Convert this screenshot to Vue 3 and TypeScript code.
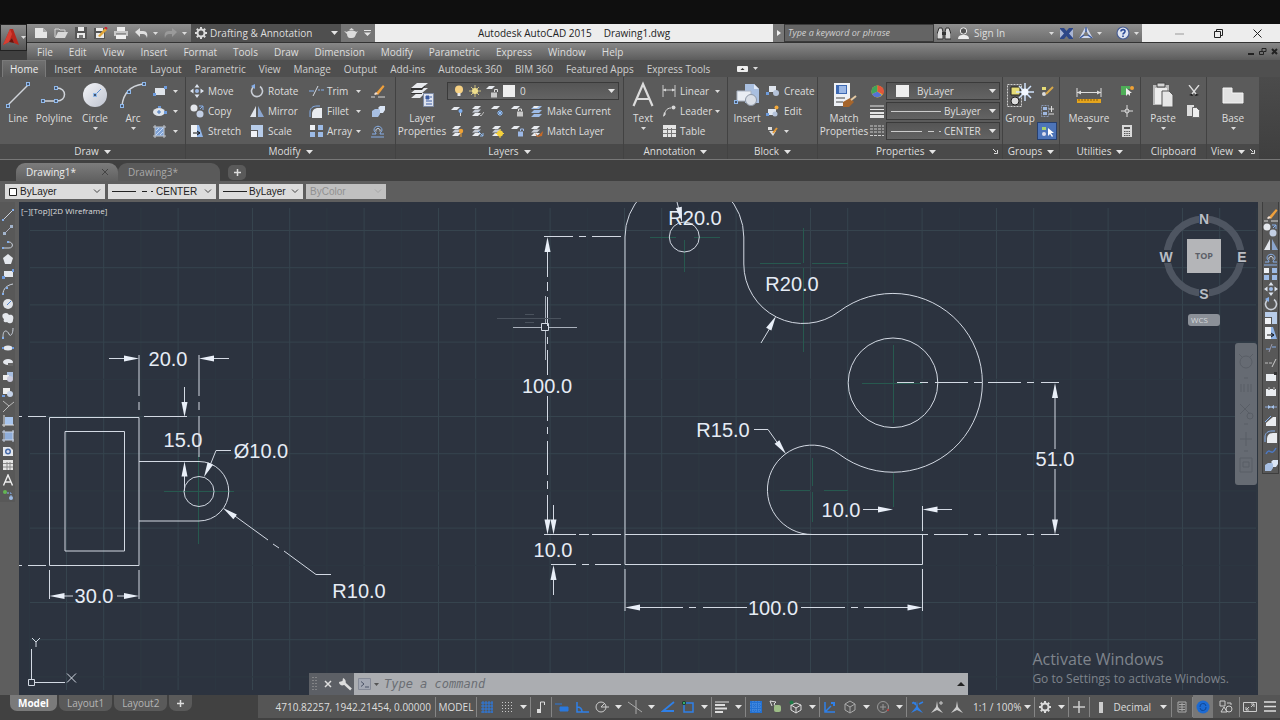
<script setup lang="ts">
import { h } from 'vue'

type Glyph = [number, number, string]

const sq = (x: number, y: number) => `<rect x="${x - 1.5}" y="${y - 1.5}" width="3" height="3" fill="#45556e" stroke="#8fb8ea"/>`
const sheet = (x: number, y: number, c = '#e8ebf0') => `<path d="M${x + 3} ${y}h6l-3 3h-6z" fill="${c}"/>`
const layers = sheet(1, 1) + sheet(1, 4.5, '#c6ccd6') + sheet(1, 8)

const glyphs: Record<string, Glyph> = {
  logo: [18, 20, '<path d="M1 17L8 1h3l6 16-5-2-2-5-3 4z" fill="#b8261c"/><path d="M8 1L1 17l6-3 3-8z" fill="#d63f33"/><path d="M7 14l3-4 2 5z" fill="#701009"/>'],
  caret: [7, 4, '<path d="M0 0h7L3.500 4z" fill="#e4e4e4"/>'],
  tiny: [5, 3, '<path d="M0 0h5L2.500 3z" fill="#dcdcdc"/>'],
  chevron: [8, 5, '<path d="M1 .5l3 3 3-3" fill="none" stroke="#444"/>'],
  up: [8, 4, '<path d="M0 4h8L4 0z" fill="#222"/>'],
  newfile: [14, 12, '<path d="M1 1h8l4 4v6H1z" fill="#e6e6e6"/><path d="M9 1v4h4" fill="#aaa"/>'],
  open: [15, 12, '<path d="M1 10V2h4l1 1h5v2" fill="none" stroke="#d5d5d5"/><path d="M1 11l3-6h10l-3 6z" fill="#d8d8d8"/>'],
  save: [12, 12, '<path d="M0 0h12v12H0z" fill="#555"/><path d="M3 0h6v4H3zM2 6h8v5H2z" fill="#e9e9e9"/><path d="M4 8h4v3H4z" fill="#777"/>'],
  saveas: [14, 12, '<path d="M0 1h11v11H0z" fill="#555"/><path d="M2 1h7v3H2zM2 6h8v5H2z" fill="#e9e9e9"/><path d="M4 9l7-8 2 2-7 7z" fill="#e0a63a"/><path d="M11 0l2 2" stroke="#c23" stroke-width="2"/>'],
  print: [14, 12, '<path d="M3 0h8v4H3z" fill="#eee"/><path d="M0 4h14v5H0z" fill="#c9c9c9"/><path d="M2 7h10v5H2z" fill="#f1f1f1"/><path d="M2 7h10" stroke="#555"/>'],
  undo: [13, 10, '<path d="M0 4l5-4v3h3c4 0 5 3 4 7-1-3-2-4-4-4H5v3z" fill="#e0e0e0"/>'],
  redo: [13, 10, '<path d="M13 4L8 0v3H5C1 3 0 6 1 10c1-3 2-4 4-4h3v3z" fill="#9a9a9a"/>'],
  gear: [12, 12, '<circle cx="6" cy="6" r="3.500" fill="none" stroke="#dcdcdc" stroke-width="2"/><path d="M6 0v2M6 10v2M0 6h2M10 6h2M1.800 1.800l1.400 1.400M8.800 8.800l1.400 1.400M1.800 10.200l1.400-1.400M8.800 3.200l1.400-1.400" stroke="#dcdcdc" stroke-width="2"/>'],
  teapot: [14, 10, '<path d="M0 3l3 1c1-2 8-2 9 0l2-1-2 3c-1 3-2 4-4 4H6C4 10 3 8 3 6z" fill="#dcdcdc"/><path d="M5 2h5L7.500 0z" fill="#dcdcdc"/>'],
  overflow: [7, 6, '<path d="M0 0h7v1H0zM0 2.500h7L3.500 6z" fill="#e4e4e4"/>'],
  play: [4, 6, '<path d="M0 0l4 3-4 3z" fill="#eee"/>'],
  binoc: [14, 13, '<path d="M2 1h3l1 4v7H0V7zM9 1h3l2 6v5H8V5z" fill="#ddd" stroke="#333"/><path d="M5 5h4v3H5z" fill="#333"/>'],
  person: [13, 13, '<circle cx="6.500" cy="4" r="3.200" fill="#555" stroke="#eee"/><path d="M1 12c0-3 2-4 4-4h3c2 0 4 1 4 4z" fill="#eee"/>'],
  exch: [13, 11, '<path d="M0 0h4l2.500 3L9 0h4v11H9L6.500 8 4 11H0z" fill="#2d4788"/><path d="M0 1l4 4.500L0 10zM13 1L9 5.500 13 10z" fill="#a9b5d3"/>'],
  a360: [14, 12, '<path d="M7 1l5 9H2z" fill="none" stroke="#cfd8ee" stroke-width="2"/><path d="M7 0v5M13 11l-4-3M1 11l4-3" stroke="#3c5a9e" stroke-width="1.500"/>'],
  help: [14, 14, '<circle cx="7" cy="7" r="6" fill="#dde3f0" stroke="#4a5f94" stroke-width="1.200"/><path d="M5 5.500C5 3 9.500 3 9 5.500 9 7 7 7 7 8.500M7 9.500V11" fill="none" stroke="#2b4a98" stroke-width="1.600"/>'],
  wmin: [9, 9, '<path d="M0 5h9" stroke="#999"/>'],
  wmax: [9, 9, '<path d="M.5 2.500h6v6h-6zM2.500 2V.5h6v6H7" fill="none" stroke="#222"/>'],
  wclose: [9, 9, '<path d="M.5.5l8 8M8.500.5l-8 8" stroke="#222"/>'],
  dmin: [7, 7, '<path d="M0 6h6" stroke="#222" stroke-width="2"/>'],
  dmax: [8, 7, '<path d="M.5 3.500h4v3h-4zM3 3V.5h4v3H5" fill="none" stroke="#222"/>'],
  dclose: [7, 7, '<path d="M1 1l5 5M6 1L1 6" stroke="#222" stroke-width="2"/>'],
  ribmin: [11, 6, '<rect width="11" height="6" rx="1" fill="#eee"/><path d="M3.500 4h4L5.500 2z" fill="#333"/>'],
  expand: [5, 5, '<path d="M0 0l3 3M4.500 1v3.500H1" fill="none" stroke="#ddd"/>'],
  plus: [7, 7, '<path d="M3.500 0v7M0 3.500h7" stroke="#ddd" stroke-width="1.500"/>'],
  cross: [6, 6, '<path d="M0 0l6 6M6 0L0 6" stroke="#444"/>'],
  // large ribbon glyphs
  line: [26, 28, '<path d="M3 24L23 4" stroke="#d0d4da" stroke-width="1.500"/>' + sq(3, 25) + sq(23, 3)],
  pline: [28, 28, '<path d="M3 20h14c10 0 10-13 0-13" fill="none" stroke="#d0d4da" stroke-width="1.500"/>' + sq(3, 20) + sq(16, 20) + sq(16, 7)],
  circle: [26, 28, '<circle cx="13" cy="14" r="12" fill="url(#g-disc)"/><path d="M13 14l6-6" stroke="#5b8fd4"/>' + sq(13, 14)],
  arc: [26, 28, '<path d="M2 25C3 14 9 5 23 3" fill="none" stroke="#d0d4da" stroke-width="1.500"/>' + sq(2, 25) + sq(9, 11) + sq(24, 3)],
  layerprops: [26, 26, '<path d="M8 1h11l-6 5H2zM8 6h11l-6 5H2zM8 11h8l-5 5H2z" fill="#e8eaee"/><path d="M2 6h11l3-2.500v1L13 8H2zM2 11h11v1H2z" fill="#333"/><path d="M14.500 11.500h10v13h-10z" fill="#dfe4ef" stroke="#7e8ba5"/><path d="M17 14h3v3h-3zM17 19h6M17 22h6M21 15h2" stroke="#3a5aa0" fill="#3a5aa0"/>'],
  text: [22, 28, '<path d="M1.500 25L11 3l9.500 22M5 18h12" fill="none" stroke="#dcdcdc" stroke-width="2.200"/>'],
  insert: [28, 28, '<path d="M12 3h9l5 5v14H12z" fill="#a9bfe0"/><path d="M21 3v5h5" fill="#dfe8f6"/><path d="M4 10h14v10H4z" fill="#e9edf3" stroke="#aab4c4"/><circle cx="18" cy="19" r="5.500" fill="#d9dee6" stroke="#8d97a6"/>' + sq(3, 21)],
  match: [26, 28, '<path d="M3 2h16v23H3z" fill="#eef1f6"/><path d="M5 4h11v9H5z" fill="#3d69b3"/><path d="M8 5h7v7H8z" fill="#9cb8e6"/><path d="M5 17h9M5 21h7" stroke="#444"/><path d="M12 21l7-4 4 4-5 5h-6z" fill="#a5652c"/><path d="M20 19l5-4" stroke="#e3c9a4" stroke-width="2"/>'],
  group: [28, 28, '<path d="M1.500 3.500h14v22h-14z" fill="none" stroke="#cfcfcf" stroke-dasharray="2 1"/><path d="M5 6h9v8H5z" fill="#e6dc76" stroke="#222"/><circle cx="9" cy="20" r="4" fill="#ddd" stroke="#222"/><path d="M19 2v18M10 11h18M13 5l12 12M25 5L13 17" stroke="#cfe2fb" stroke-width="1.500"/><circle cx="19" cy="11" r="3.500" fill="#f3f8ff"/>'],
  measure: [26, 28, '<path d="M1 7v9M25 7v9M1 11.500h24" stroke="#ddd"/><path d="M1 11.500l4-2v4zM25 11.500l-4-2v4z" fill="#ddd"/><path d="M1 18h24v4H1z" fill="#e5a51d"/><path d="M3 18v2M6 18v2M9 18v2M12 18v2M15 18v2M18 18v2M21 18v2" stroke="#8c5c05"/>'],
  paste: [24, 28, '<path d="M2 4h16v20H2z" fill="#b9b9b9"/><path d="M4 7h12v16H4z" fill="#ededed"/><path d="M6 2h8v4H6z" fill="#d5d5d5" stroke="#444"/><path d="M11 10h7l4 4v12H11z" fill="#e6e6e6" stroke="#555"/>'],
  base: [24, 28, '<path d="M2 7h9v5h11v10H2z" fill="#e2e2e2" stroke="#f5f5f5"/>'],
  // small ribbon glyphs
  rect: [15, 13, '<path d="M3 3h10v7H3z" fill="#dfe4ea"/><path d="M1 8h3v3H1zM12 1h3v3h-3z" fill="#6d9bdc"/>'],
  ellipse: [15, 13, '<ellipse cx="7" cy="7" rx="6" ry="4" fill="#dfe4ea"/><path d="M5 7h4M7 5v4" stroke="#4275bd"/><path d="M12 6h3v3h-3zM6 1h3v2H6z" fill="#6d9bdc"/>'],
  hatch: [15, 15, '<path d="M3 3h9v9H3z" fill="#7fa2d4"/><path d="M1 3h13M1 12h13M3 1v13M12 1v13" stroke="#c3c9d2"/><path d="M4 11l7-7M4 7l3-3M8 11l3-3" stroke="#c8d9f3"/>'],
  move: [14, 14, '<path d="M7 0l2.500 3.500h-5zM7 14l2.500-3.500h-5zM0 7l3.500-2.500v5zM14 7l-3.500-2.500v5z" fill="#dce3ee"/><circle cx="7" cy="7" r="2" fill="#9db9e4"/>'],
  copy: [15, 14, '<circle cx="4" cy="4" r="3.500" fill="#e4e7ec"/><circle cx="10" cy="10" r="3.500" fill="#c3cfe4"/><path d="M9 2h4v4M13 2l-3 3" fill="none" stroke="#86aee8"/>'],
  stretch: [14, 14, '<path d="M1 1h6v12H1z" fill="#eef1f5"/><path d="M7 1h2l4 12H7z" fill="#8fb3e6"/><path d="M3 9h6M7 7l3 2-3 2" stroke="#111" fill="none"/>'],
  rotate: [14, 14, '<path d="M4 2.500A5.500 5.500 0 1 0 10 2.500" fill="none" stroke="#c9ced6" stroke-width="1.600"/><path d="M5 0v5L1 2z" fill="#86aee8"/>'],
  mirror: [14, 13, '<path d="M6 1v11H0z" fill="#e2e6ec"/><path d="M8 1v11h6z" fill="#8ba6cf"/>'],
  scale: [14, 14, '<path d="M1 1h12v12H8V6H1z" fill="#b8cdea"/><path d="M1 7h6v6H1z" fill="#f0f2f6"/>'],
  trim: [15, 12, '<path d="M0 6h5M9 5h2M12 5h3" stroke="#84aeea"/><path d="M4 11L9 1" stroke="#d5dae2"/>'],
  fillet: [14, 13, '<path d="M3 13V9c0-4 3-6 6-6h4v10z" fill="#e9ecf0"/><path d="M1 12V7c0-4 3-6 7-6h3" fill="none" stroke="#84aeea"/>'],
  array: [15, 14, '<path d="M1 1h5v5H1z" fill="#eef1f5"/><path d="M9 1h5v5H9zM1 8h5v5H1zM9 8h5v5H9z" fill="#9dbbe6"/>'],
  erase: [14, 14, '<path d="M5 9l7-8 1.500 1.500L7 11z" fill="#efa03c"/><path d="M3 10l2-2 2 2-3 1z" fill="#f1ded0"/><path d="M0 13h4M7 13h7" stroke="#d7d7d7"/>'],
  explode: [14, 13, '<path d="M1 6l3-2h5v5l-2 3H1z" fill="#a7bfe3"/><path d="M7 3l2-2h5v4l-2 3H9V5z" fill="#dae5f5"/>'],
  offset: [14, 13, '<path d="M0 12h13M1 9h4c0-2-2-2-2-4 0-5 8-5 8 0 0 2-2 2-2 4h4" fill="none" stroke="#86aee8"/><path d="M5 6.500c-1-4 5-4 4 0" fill="none" stroke="#dce3ee"/>'],
  l1: [13, 12, sheet(0, 2) + '<circle cx="9.500" cy="6" r="2" fill="#7fb0f2"/><path d="M9.500 8v3" stroke="#ddd"/>'],
  l2: [13, 12, layers + '<path d="M8 9l2 2 3-4" stroke="#bbb" fill="none"/>'],
  l3: [13, 12, sheet(0, 1) + '<path d="M9 5v6M6 8h6M7 6l4 4M11 6l-4 4" stroke="#8fc0ff"/>'],
  l4: [13, 12, sheet(0, 1) + '<path d="M6 6.500h6v5H6z" fill="#c8c8c8"/><path d="M7.500 6V4h3v2" fill="none" stroke="#ddd"/>'],
  l5: [13, 13, '<path d="M4 1h8l-3 3H1zM4 5h8l-3 3H1zM4 9h8l-3 3H1z" fill="#9dbbe6"/><path d="M4 1h5l-2 2H3z" fill="#eee"/>'],
  m1: [13, 12, layers + '<circle cx="10" cy="6" r="2.200" fill="#f0a234"/><path d="M10 8v4" stroke="#f0a234"/>'],
  m2: [13, 12, layers + '<path d="M7 6l5 5M12 8v3H9" stroke="#8fb8ea" fill="none"/>'],
  m3: [13, 13, layers + '<circle cx="9" cy="8.500" r="3" fill="#f5d13c"/><path d="M9 4v9M4.500 8.500h9" stroke="#f5d13c"/>'],
  m4: [13, 12, sheet(0, 1) + '<path d="M7 6.500h5v5H7z" fill="#9cb8e6"/><path d="M9.500 6V4h3v2" fill="none" stroke="#9cb8e6"/>'],
  m5: [13, 12, layers + '<path d="M5 8l3 3 5-5-1 5-5 1z" fill="#c96a26"/>'],
  bulb: [10, 13, '<circle cx="5" cy="4.500" r="4" fill="#f6d183"/><path d="M3.500 8h3v3h-3z" fill="#e7e7e7"/>'],
  sun: [12, 12, '<circle cx="6" cy="6" r="3" fill="#f7e58e"/><path d="M6 0v12M0 6h12M2 2l8 8M10 2l-8 8" stroke="#e9d98c" stroke-width=".8"/>'],
  unlock: [12, 13, sheet(0, 1) + '<path d="M5 7.500h6v5H5z" fill="#c8c8c8"/><path d="M8.500 7V4.500h3V7" fill="none" stroke="#ddd"/>'],
  white: [12, 12, '<path d="M0 0h12v12H0z" fill="#eee"/>'],
  wide: [13, 12, '<path d="M0 0h13v12H0z" fill="#eee"/>'],
  linear: [14, 12, '<path d="M1 0v12M13 0v12M1 5h12" stroke="#c8c8c8"/><path d="M1 5l3-1.500v3zM13 5l-3-1.500v3z" fill="#d8d8d8"/>'],
  leader: [13, 12, '<path d="M1 11c1-4 2-8 7-8" fill="none" stroke="#d8d8d8"/><circle cx="10.500" cy="2.500" r="2" fill="#d8d8d8"/><path d="M0 12l1-5 2 2z" fill="#d8d8d8"/>'],
  table: [13, 12, '<path d="M0 0h13v12H0z" fill="#e5e5e5"/><path d="M0 4.500h13M0 8.500h13M4.500 3v9M8.500 3v9" stroke="#777"/>'],
  create: [14, 12, '<path d="M3 1h7v6H3z" fill="#dfe5ee"/><circle cx="10" cy="8" r="3" fill="#b5c3da"/><path d="M0 7h3v3H0z" fill="#6d9bdc"/>'],
  edit: [14, 12, '<path d="M2 4h8v6H2z" fill="#dfe5ee"/><circle cx="10.500" cy="2.500" r="2" fill="#f3a93b"/><circle cx="9" cy="9" r="2.500" fill="#b5c3da"/><path d="M0 8h3v3H0z" fill="#6d9bdc"/>'],
  attr: [12, 11, '<path d="M1 1h4v3H1zM2 5l4 5 3-5z" fill="#ddd"/><path d="M6 7l4-5" stroke="#e59a35" stroke-width="2"/>'],
  wheel: [13, 13, '<circle cx="6.500" cy="6.500" r="6" fill="#e6c52a"/><path d="M6.500 6.500V.5A6 6 0 0 0 1 9z" fill="#3fa55b"/><path d="M6.500 6.500L1 9a6 6 0 0 0 10 1z" fill="#5573d4"/><path d="M6.500 6.500V.5a6 6 0 0 1 5.500 9z" fill="#e2553b"/>'],
  weights: [14, 13, '<path d="M0 1h14M0 4.500h14" stroke="#e5e5e5"/><path d="M0 8h14" stroke="#e5e5e5" stroke-width="2"/><path d="M0 11.500h14" stroke="#e5e5e5" stroke-width="3"/>'],
  dashes: [14, 12, '<path d="M0 1h14M0 4h14M0 7h14M0 10.500h14" stroke="#ccc" stroke-dasharray="3 1"/>'],
  g1: [13, 12, '<path d="M1 2h4v3H1z" fill="#e6dc76"/><circle cx="3" cy="9" r="2" fill="#ddd"/><path d="M5 9l7-7" stroke="#d9a94a" stroke-width="2"/>'],
  g2: [13, 12, '<path d="M.5.500h7v11h-7z" fill="none" stroke="#8b99b5" stroke-dasharray="2 1"/><path d="M2 2h4v3H2zM2 7h4v3H2z" fill="#9fb8e0"/><path d="M8 4h5M10.500 1v6M8 9h5" stroke="#ddd"/>'],
  g3: [13, 12, '<path d="M1 2h4v3H1z" fill="#a8cf6e"/><circle cx="3" cy="9" r="2" fill="#dde"/><path d="M7 3v8l2-2 2 3 1-1-2-3h3z" fill="#fff"/>'],
  u1: [14, 12, '<path d="M1 1h5v9H1zM6 1h4v3H6z" fill="#4fae58"/><path d="M6 3v8l2-2 2 2V8h2z" fill="#eee"/><circle cx="12" cy="3" r="2" fill="#f0a234"/>'],
  u2: [12, 12, '<path d="M6 0v12M0 6h12" stroke="#ddd"/><circle cx="6" cy="6" r="2" fill="#888" stroke="#ddd"/>'],
  u3: [10, 12, '<path d="M0 0h10v12H0z" fill="#d9d9d9"/><path d="M2 2h6v2H2z" fill="#555"/><path d="M2 6.500h6M2 8.500h6M2 10.500h6" stroke="#555" stroke-dasharray="1.500 .8"/>'],
  cut: [12, 12, '<path d="M1 0l7 9M11 0L4 9" stroke="#ddd" stroke-width="1.300"/><path d="M1 10l3-1 1 2zM11 10l-3-1-1 2z" fill="#111"/>'],
  copyc: [13, 13, '<path d="M0 0h7v11H0z" fill="#ddd"/><path d="M5.500 2.500h4l3 3v7h-7z" fill="#eee" stroke="#666"/>'],
  // tool palette glyphs
  tline: [12, 12, '<path d="M1 11L11 1" stroke="#ccd3dd"/><path d="M0 10h2v2H0zM10 0h2v2h-2z" fill="#84aeea"/>'],
  txline: [12, 12, '<path d="M1 11L11 1" stroke="#aab"/><path d="M1 8h3v3H1zM8 1h3v3H8z" fill="#a3b4cc"/>'],
  tpline: [12, 12, '<path d="M1 9h6c5 0 4-6 0-6" fill="none" stroke="#ccd3dd"/><path d="M0 8h2v2H0zM5 2h2v2H5z" fill="#84aeea"/>'],
  poly: [12, 12, '<path d="M6 1l5 4-2 6H3L1 5z" fill="#e4e7ec"/>'],
  trect: [12, 12, '<path d="M2 3h9v6H2z" fill="#e4e7ec"/><path d="M0 8h3v3H0zM10 1h2v3h-2z" fill="#6f9bdd"/>'],
  tarc: [12, 12, '<path d="M1 11C1 6 5 2 11 1" fill="none" stroke="#ccd3dd"/><path d="M0 10h2v2H0zM4 4h2v2H4z" fill="#84aeea"/>'],
  tcircle: [12, 12, '<circle cx="6" cy="6" r="5" fill="#e0e4ea"/><path d="M5 7l4-4" stroke="#4d7fc9"/>'],
  cloud: [12, 12, '<path d="M1 2c3-2 5-1 6 1 4-1 5 2 4 5 0 4-4 4-6 2-3 1-4-1-3-3-2-1-2-4-1-5z" fill="#e4e7ec"/>'],
  spline: [12, 12, '<path d="M1 10c0-9 5-6 6-3s4 1 4-6" fill="none" stroke="#ccd3dd"/><path d="M0 10h2v2H0z" fill="#84aeea"/>'],
  tell: [12, 12, '<ellipse cx="6" cy="6" rx="4.500" ry="2.500" fill="#e4e7ec"/><path d="M0 5h2v2H0zM10 5h2v2h-2z" fill="#6f9bdd"/>'],
  tellarc: [12, 12, '<ellipse cx="6" cy="6" rx="5" ry="3" fill="#e4e7ec"/><path d="M6 7h5v3H6z" fill="#666"/>'],
  tins: [12, 12, '<path d="M5 1h6v6H5z" fill="#a9bfe0"/><path d="M1 4h6v5H1z" fill="#eee"/><circle cx="8" cy="8" r="3" fill="#ccd"/>'],
  tblock: [12, 12, '<path d="M1 2h7v6H1z" fill="#eee"/><circle cx="8" cy="8" r="3" fill="#c6d4ea"/><path d="M0 9h3v2H0z" fill="#6f9bdd"/>'],
  tpoint: [12, 12, '<path d="M1 1l6 5 5-4M7 6l-6 6" fill="none" stroke="#bbb"/>'],
  thatch: [12, 12, '<path d="M3 2h8v8H3z" fill="#a9c6ee"/><path d="M2 0v12M0 10h12" stroke="#ddd"/>'],
  tgrad: [12, 12, '<path d="M3 2h8v8H3z" fill="#8fadd9"/><path d="M2 0v12M0 10h12M0 2h12M11 0v12" stroke="#c9d4e6"/>'],
  region: [12, 12, '<path d="M1 2h7l3 3v6H1z" fill="#e4e7ec"/><circle cx="6" cy="6.500" r="3" fill="#456ba8"/><circle cx="6" cy="6.500" r="1.500" fill="#dde"/>'],
  ttable: [12, 12, '<path d="M1 1h10v10H1z" fill="#e5e5e5"/><path d="M1 4.500h10M1 8h10M5 3v8M8 3v8" stroke="#888"/>'],
  mtext: [12, 12, '<path d="M1.500 11.500L6 1l4.500 10.500M3 8h6" fill="none" stroke="#eee" stroke-width="1.400"/>'],
  addsel: [12, 12, '<circle cx="3" cy="3" r="2" fill="#64b552"/><circle cx="9" cy="9" r="2" fill="#9dbbe6"/><path d="M5 4h4v3" fill="none" stroke="#84aeea" stroke-dasharray="2 1"/>'],
  tbreak: [12, 12, '<path d="M1 7h4M7 5h4" stroke="#84aeea"/><path d="M4 10l3-8" stroke="#99a" />'],
  textend: [12, 12, '<path d="M0 6h3M4 6h3" stroke="#bbb"/><path d="M7 10l4-8" stroke="#ccc"/>'],
  tbreak1: [12, 12, '<path d="M1 3h10v7H1z" fill="#e9ecf0"/><path d="M9 1h3v3H9z" fill="#333"/>'],
  tbreak2: [12, 12, '<path d="M1 3h10v7H1z" fill="#e9ecf0"/><path d="M3 1h2v3H3zM8 1h2v3H8z" fill="#888"/>'],
  tjoin: [12, 12, '<path d="M0 6h12" stroke="#8fa9d6"/><path d="M3 4l3 2-3 2zM9 4L6 6l3 2z" fill="#a9c6ee"/>'],
  chamfer: [12, 12, '<path d="M1 11V8l7-6h3v9z" fill="#e9ecf0"/><path d="M0 7l6-6" stroke="#84aeea"/>'],
  blend: [12, 12, '<path d="M1 9c4-8 5 4 10-6" fill="none" stroke="#4c79c4" stroke-width="1.500"/>'],
  // command line + status glyphs
  grip: [5, 16, '<path d="M1 1v14M4 1v14" stroke="#aaa" stroke-dasharray="1 2"/>'],
  x: [8, 8, '<path d="M1 1l6 6M7 1L1 7" stroke="#ddd" stroke-width="1.500"/>'],
  wrench: [13, 13, '<path d="M5 5l7 6.500" stroke="#ddd" stroke-width="2.500"/><path d="M4 0l-.5 3L0 4c0 3 3 4 5 3s3-5-1-7z" fill="#ddd"/>'],
  prompt: [13, 12, '<path d="M.5.500h12v11H.5z" fill="#a3a8b4" stroke="#868b98"/><path d="M3 3.500l3 2.500-3 2.500M7 9h4" fill="none" stroke="#4c5468"/>'],
  greytiny: [5, 3, '<path d="M0 0h5L2.500 3z" fill="#555"/>'],
  sgrid: [12, 12, '<path d="M2 0v12M5 0v12M8 0v12M11 0v12M0 2h12M0 5h12M0 8h12M0 11h12" stroke="#2d7be0"/>'],
  sdots: [12, 12, '<path d="M1.500 1v11M4.500 1v11M7.500 1v11M10.500 1v11" stroke="#c9c9c9" stroke-dasharray="1 2"/>'],
  infer: [10, 12, '<path d="M4.500 9V1h4v3" fill="none" stroke="#ddd"/><path d="M1 8h4v4H1z" fill="#ddd"/>'],
  dyn: [14, 12, '<path d="M0 3h7M5 6h8v4H5z" stroke="#2b78dc" fill="#2b78dc"/>'],
  ortho: [14, 12, '<path d="M2 1v10h12M2 6c4 0 5 2 5 5" fill="none" stroke="#2f80e8" stroke-width="1.500"/>'],
  polar: [14, 14, '<circle cx="6" cy="7" r="5" fill="none" stroke="#ccc"/><path d="M6 7l4-4M6 7h8" stroke="#ccc"/>'],
  iso: [14, 14, '<path d="M0 2l14 10M8 0v14" stroke="#aaa"/>'],
  otrack: [14, 12, '<path d="M13 1L2 10h11" fill="none" stroke="#2f80e8" stroke-width="1.800"/>'],
  osnap: [14, 14, '<path d="M3 3h9v9H3z" fill="none" stroke="#2f80e8" stroke-width="1.500"/><circle cx="3" cy="3" r="2" fill="#143d2a"/><circle cx="3" cy="3" r="1" fill="#4ad07a"/>'],
  lwt: [14, 12, '<path d="M0 1h14" stroke="#ddd"/><path d="M0 4h10" stroke="#ddd" stroke-width="2"/><path d="M0 7.500h12" stroke="#ddd" stroke-width="2"/><path d="M0 11h8" stroke="#ddd" stroke-width="2"/>'],
  transp: [14, 14, '<path d="M1 1h12v12H1z" fill="#2371d2"/><path d="M1 4h12M1 7h12M1 10h12M4 1v12M7 1v12M10 1v12" stroke="#5594e2" stroke-dasharray="1 1"/>'],
  selcyc: [14, 13, '<path d="M1 1l6 1-2 2 2 3M1 1l2 5" stroke="#ddd" fill="none"/><rect x="5" y="5" width="7" height="7" rx="2" fill="#9dbd86"/>'],
  cube3: [14, 14, '<path d="M7 3l5 2v5l-5 3-5-3V5zM2 5l5 3 5-3M7 8v5" fill="none" stroke="#ddd"/><circle cx="2.500" cy="2.500" r="2" fill="#1c7a45"/>'],
  ucs: [14, 14, '<path d="M2 2v10h10M2 12l6-6" fill="none" stroke="#2f80e8" stroke-width="1.500"/><path d="M8 3h3v3" fill="none" stroke="#2f80e8" stroke-width="2"/>'],
  cube: [14, 14, '<path d="M7 1l5 3v6l-5 3-5-3V4zM2 4l5 3 5-3M7 7v6" fill="none" stroke="#aaa"/>'],
  gizmo: [14, 14, '<circle cx="7" cy="7" r="5.500" fill="none" stroke="#999"/><path d="M7 4v6M4 7h6" stroke="#999"/><circle cx="12" cy="10" r="1" fill="#c33"/>'],
  ann1: [14, 14, '<path d="M7 1l1 6 5 6-6-3-6 3 5-6z" fill="#2f80e8"/><path d="M2 3h4M9 4l4-2M3 2l3 3" stroke="#2f80e8" stroke-width="1.500"/>'],
  ann2: [14, 14, '<path d="M7 1l1 6 5 6-6-3-6 3 5-6z" fill="#ccc"/><path d="M9 3h4M11 1v4" stroke="#ccc"/>'],
  ann3: [14, 14, '<path d="M7 1l1 6 5 6-6-3-6 3 5-6z" fill="#ccc"/>'],
  splus: [12, 12, '<path d="M6 0v12M0 6h12" stroke="#ccc" stroke-width="1.500"/>'],
  unit: [6, 12, '<path d="M1 1h4v11H1z" fill="#ccc"/>'],
  qprop: [10, 12, '<path d="M1 1h8v10H1z" fill="none" stroke="#aaa"/><path d="M2 3.500h6M2 6h6M2 8.500h6M5 2v8" stroke="#aaa"/>'],
  gpu: [14, 14, '<circle cx="7" cy="7" r="6.500" fill="#1c6ad2"/><path d="M4 7a3 3 0 0 1 6-1M10 7a3 3 0 0 1-6 1" fill="none" stroke="#0d4696"/>'],
  isolate: [14, 13, '<path d="M1 1h5v5H1zM5 7l3 5H2z" fill="none" stroke="#ccc"/><circle cx="10" cy="9" r="3" fill="none" stroke="#ccc"/><path d="M8 3h4v2" fill="none" stroke="#ccc"/>'],
  clean: [14, 12, '<path d="M.5 1.500h13v9H.5z" fill="none" stroke="#ccc"/><path d="M8 6l3-3M11 6V3H8M3 6v3h3M3 9l3-3" fill="none" stroke="#ccc"/>'],
  menu: [12, 11, '<path d="M0 1h12M0 5.500h12M0 10h12" stroke="#ddd" stroke-width="1.300"/>'],
  swatch: [8, 8, '<path d="M.5.500h7v7h-7z" fill="#fff" stroke="#222"/>'],
  dashDark: [42, 3, '<path d="M0 1.500h24M30 1.500h5M39 1.500h2" stroke="#222"/>'],
  lineDark: [24, 3, '<path d="M0 1.500h24" stroke="#222"/>'],
  lineLight: [50, 3, '<path d="M0 1.500h50" stroke="#ccc"/>'],
  dashLight: [50, 3, '<path d="M0 1.500h31M37 1.500h6M48 1.500h2" stroke="#ccc"/>'],
}

const Icon = (props: { name: string }) => {
  const [w, hh, body] = glyphs[props.name]
  return h('svg', { width: w, height: hh, viewBox: `0 0 ${w} ${hh}`, 'aria-hidden': 'true', innerHTML: body })
}
Icon.props = ['name']

const menus = ['File', 'Edit', 'View', 'Insert', 'Format', 'Tools', 'Draw', 'Dimension', 'Modify', 'Parametric', 'Express', 'Window', 'Help']
const tabs = ['Home', 'Insert', 'Annotate', 'Layout', 'Parametric', 'View', 'Manage', 'Output', 'Add-ins', 'Autodesk 360', 'BIM 360', 'Featured Apps', 'Express Tools']

interface Cmd { icon: string; label?: string; drop?: boolean }
const modify: Cmd[][] = [
  [{ icon: 'move', label: 'Move' }, { icon: 'copy', label: 'Copy' }, { icon: 'stretch', label: 'Stretch' }],
  [{ icon: 'rotate', label: 'Rotate' }, { icon: 'mirror', label: 'Mirror' }, { icon: 'scale', label: 'Scale' }],
  [{ icon: 'trim', label: 'Trim', drop: true }, { icon: 'fillet', label: 'Fillet', drop: true }, { icon: 'array', label: 'Array', drop: true }],
  [{ icon: 'erase' }, { icon: 'explode' }, { icon: 'offset' }],
]
const drawBig: Cmd[] = [{ icon: 'line', label: 'Line' }, { icon: 'pline', label: 'Polyline' }, { icon: 'circle', label: 'Circle', drop: true }, { icon: 'arc', label: 'Arc', drop: true }]

const drawTools = ['tline', 'txline', 'tpline', 'poly', 'trect', 'tarc', 'tcircle', 'cloud', 'spline', 'tell', 'tellarc', 'tins', 'tblock', 'tpoint', 'thatch', 'tgrad', 'region', 'ttable', 'mtext', 'addsel']
const editTools = ['erase', 'copy', 'mirror', 'offset', 'array', 'move', 'rotate', 'scale', 'stretch', 'tbreak', 'textend', 'tbreak1', 'tbreak2', 'tjoin', 'chamfer', 'fillet', 'blend', 'explode']

const statusLeft = ['sgrid', 'sdots', 'caret', '|', 'infer', '|', 'dyn', 'ortho', 'polar', 'caret', 'iso', 'caret', 'otrack', 'osnap', 'caret', '|', 'lwt', 'caret', '|', 'transp', 'selcyc', 'cube3', 'caret', '|', 'ucs', 'cube', 'caret', 'gizmo', 'caret', '|', 'ann1', 'ann2', 'ann3']

const range = (n: number) => Array.from({ length: n }, (_, i) => i)
const gridX = range(34).map(k => ({ at: 66.5 + 37.2 * (k - 1), major: [1, 2, 4].includes(k % 5) }))
const gridY = range(13).map(k => ({ at: 230.5 + 37.2 * k, major: ![4, 7, 9, 12].includes(k) }))

interface Arrow { x: number; y: number; a: number }
const arrows: Arrow[] = [
  { x: 139, y: 358.5, a: 0 }, { x: 199, y: 358.5, a: 180 }, { x: 184.5, y: 417, a: 90 }, { x: 184.5, y: 461.5, a: -90 },
  { x: 49.5, y: 596, a: 180 }, { x: 139, y: 596, a: 0 }, { x: 204, y: 477, a: 115 }, { x: 223, y: 508, a: 216 },
  { x: 547.5, y: 237, a: -90 }, { x: 547.5, y: 534.5, a: 90 }, { x: 553.5, y: 534.5, a: 90 }, { x: 553.5, y: 565, a: -90 },
  { x: 625, y: 607.5, a: 180 }, { x: 922.5, y: 607.5, a: 0 }, { x: 893, y: 509.5, a: 0 }, { x: 922.5, y: 509.5, a: 180 },
  { x: 1055, y: 383, a: -90 }, { x: 1055, y: 534.5, a: 90 }, { x: 786, y: 454, a: 53 }, { x: 776, y: 316, a: -61 }, { x: 682, y: 222, a: 78 },
]
const dims = [
  { x: 168, y: 366, t: '20.0' }, { x: 183, y: 447, t: '15.0' }, { x: 261, y: 458, t: 'Ø10.0' }, { x: 94, y: 603, t: '30.0' }, { x: 359, y: 598, t: 'R10.0' },
  { x: 695, y: 225, t: 'R20.0' }, { x: 792, y: 291, t: 'R20.0' }, { x: 547, y: 393, t: '100.0' }, { x: 723, y: 437, t: 'R15.0' }, { x: 553, y: 557, t: '10.0' },
  { x: 841, y: 517, t: '10.0' }, { x: 1055, y: 466, t: '51.0' }, { x: 773, y: 615, t: '100.0' },
]
</script>

<template>
  <div class="app">
    <svg class="defs" aria-hidden="true"><defs><linearGradient id="g-disc" x1="0" y1="0" x2="1" y2="1"><stop offset="0" stop-color="#f4f5f8" /><stop offset="1" stop-color="#bfc4d0" /></linearGradient></defs></svg>
    <div class="letterbox"></div>
    <header class="head">
      <button class="appbtn" aria-label="Application menu"><Icon name="logo" /><Icon name="tiny" /></button>
      <div class="headrows">
        <div class="titlebar">
          <div class="quick">
            <button v-for="n in ['newfile', 'open', 'save', 'saveas', 'print']" :key="n" :aria-label="n" class="q"><Icon :name="n" /></button>
            <button class="q" aria-label="Undo"><Icon name="undo" /></button><button class="qd" aria-label="Undo list"><Icon name="tiny" /></button>
            <button class="q" aria-label="Redo"><Icon name="redo" /></button><button class="qd" aria-label="Redo list"><Icon name="tiny" /></button>
          </div>
          <label class="workspace"><Icon name="gear" /><select aria-label="Workspace"><option>Drafting &amp; Annotation</option></select><Icon name="caret" class="arrow" /></label>
          <div class="quick2"><button aria-label="Render"><Icon name="teapot" /></button><button aria-label="Customize"><Icon name="overflow" /></button></div>
          <h1 class="title"><span>Autodesk AutoCAD 2015</span><span>Drawing1.dwg</span></h1>
          <button class="play" aria-label="Expand search"><Icon name="play" /></button>
          <input class="search" type="text" placeholder="Type a keyword or phrase" aria-label="Search" />
          <div class="account">
            <button aria-label="Find"><Icon name="binoc" /></button>
            <button class="sign"><Icon name="person" /><span>Sign In</span><Icon name="tiny" /></button>
            <button aria-label="Exchange"><Icon name="exch" /></button>
            <button aria-label="A360"><Icon name="a360" /><Icon name="tiny" /></button>
            <button class="helpb" aria-label="Help"><Icon name="help" /><Icon name="tiny" /></button>
          </div>
          <div class="winbtns"><button aria-label="Minimize"><Icon name="wmin" /></button><button aria-label="Restore"><Icon name="wmax" /></button><button aria-label="Close"><Icon name="wclose" /></button></div>
        </div>
        <nav class="menubar">
          <button v-for="m in menus" :key="m">{{ m }}</button>
          <div class="docbtns"><button aria-label="Minimize drawing"><Icon name="dmin" /></button><button aria-label="Restore drawing"><Icon name="dmax" /></button><button aria-label="Close drawing"><Icon name="dclose" /></button></div>
        </nav>
      </div>
    </header>

    <nav class="tabs">
      <button v-for="(t, i) in tabs" :key="t" :class="{ on: i === 0 }">{{ t }}</button>
      <button class="ribmin" aria-label="Minimize ribbon"><Icon name="ribmin" /><Icon name="tiny" /></button>
    </nav>

    <div class="ribbon">
      <section class="panel draw">
        <div class="body">
          <button v-for="c in drawBig" :key="c.icon" class="big"><Icon :name="c.icon" /><span>{{ c.label }}</span><Icon v-if="c.drop" name="tiny" /></button>
          <div class="col"><button v-for="n in ['rect', 'ellipse', 'hatch']" :key="n" :aria-label="n" class="cmd"><i><Icon :name="n" /></i><Icon name="tiny" class="drop" /></button></div>
        </div>
        <button class="cap">Draw<Icon name="caret" /></button>
      </section>
      <section class="panel modify">
        <div class="body">
          <div v-for="(c, k) in modify" :key="k" class="col"><button v-for="b in c" :key="b.icon" :aria-label="b.icon" class="cmd"><i><Icon :name="b.icon" /></i><span v-if="b.label">{{ b.label }}</span><Icon v-if="b.drop" name="tiny" class="drop" /></button></div>
        </div>
        <button class="cap">Modify<Icon name="caret" /></button>
      </section>
      <section class="panel layers">
        <div class="body">
          <button class="big"><Icon name="layerprops" /><span>Layer<br />Properties</span></button>
          <div class="col">
            <label class="combo layersel"><Icon name="bulb" /><Icon name="sun" /><Icon name="unlock" /><Icon name="white" /><select aria-label="Layer"><option>0</option></select><Icon name="caret" class="arrow" /></label>
            <div class="strip"><button v-for="n in ['l1', 'l2', 'l3', 'l4']" :key="n" :aria-label="n"><Icon :name="n" /></button><button class="lab"><i><Icon name="l5" /></i>Make Current</button></div>
            <div class="strip"><button v-for="n in ['m1', 'm2', 'm3', 'm4']" :key="n" :aria-label="n"><Icon :name="n" /></button><button class="lab"><i><Icon name="m5" /></i>Match Layer</button></div>
          </div>
        </div>
        <button class="cap">Layers<Icon name="caret" /></button>
      </section>
      <section class="panel annotation">
        <div class="body">
          <button class="big"><Icon name="text" /><span>Text</span><Icon name="tiny" /></button>
          <div class="col">
            <button class="cmd"><i><Icon name="linear" /></i><span>Linear</span><Icon name="tiny" class="drop" /></button>
            <button class="cmd"><i><Icon name="leader" /></i><span>Leader</span><Icon name="tiny" class="drop" /></button>
            <button class="cmd"><i><Icon name="table" /></i><span>Table</span></button>
          </div>
        </div>
        <button class="cap">Annotation<Icon name="caret" /></button>
      </section>
      <section class="panel block">
        <div class="body">
          <button class="big"><Icon name="insert" /><span>Insert</span></button>
          <div class="col">
            <button class="cmd"><i><Icon name="create" /></i><span>Create</span></button>
            <button class="cmd"><i><Icon name="edit" /></i><span>Edit</span></button>
            <button class="cmd" aria-label="Attributes"><i><Icon name="attr" /></i><Icon name="tiny" /></button>
          </div>
        </div>
        <button class="cap">Block<Icon name="caret" /></button>
      </section>
      <section class="panel properties">
        <div class="body">
          <button class="big"><Icon name="match" /><span>Match<br />Properties</span></button>
          <div class="col mini"><Icon name="wheel" /><Icon name="weights" /><Icon name="dashes" /></div>
          <div class="col">
            <label class="combo color"><Icon name="wide" /><select aria-label="Object color"><option>ByLayer</option></select><Icon name="caret" class="arrow" /></label>
            <label class="combo"><Icon name="lineLight" /><select aria-label="Lineweight"><option>ByLayer</option></select><Icon name="caret" class="arrow" /></label>
            <label class="combo"><Icon name="dashLight" /><select aria-label="Linetype"><option>CENTER</option></select><Icon name="caret" class="arrow" /></label>
          </div>
        </div>
        <button class="cap">Properties<Icon name="caret" /><Icon name="expand" class="exp" /></button>
      </section>
      <section class="panel groups">
        <div class="body">
          <button class="big"><Icon name="group" /><span>Group</span></button>
          <div class="col mini"><button aria-label="Ungroup"><Icon name="g1" /></button><button aria-label="Group edit"><Icon name="g2" /></button><button class="hot" aria-label="Group selection"><Icon name="g3" /></button></div>
        </div>
        <button class="cap">Groups<Icon name="caret" /></button>
      </section>
      <section class="panel utilities">
        <div class="body">
          <button class="big"><Icon name="measure" /><span>Measure</span><Icon name="tiny" /></button>
          <div class="col mini"><button v-for="n in ['u1', 'u2', 'u3']" :key="n" :aria-label="n"><Icon :name="n" /></button></div>
        </div>
        <button class="cap">Utilities<Icon name="caret" /></button>
      </section>
      <section class="panel clipboard">
        <div class="body">
          <button class="big"><Icon name="paste" /><span>Paste</span><Icon name="tiny" /></button>
          <div class="col mini"><button aria-label="Cut"><Icon name="cut" /></button><button aria-label="Copy clip"><Icon name="copyc" /></button></div>
        </div>
        <div class="cap">Clipboard</div>
      </section>
      <section class="panel view">
        <div class="body"><button class="big"><Icon name="base" /><span>Base</span><Icon name="tiny" /></button></div>
        <button class="cap">View<Icon name="caret" /><Icon name="expand" /></button>
      </section>
    </div>

    <div class="files">
      <button class="file on"><span>Drawing1*</span><Icon name="cross" /></button>
      <button class="file"><span>Drawing3*</span></button>
      <button class="add" aria-label="New drawing"><Icon name="plus" /></button>
    </div>

    <div class="props">
      <label class="sel s1"><Icon name="swatch" /><select aria-label="Color"><option>ByLayer</option></select><Icon name="chevron" /></label>
      <label class="sel s2"><Icon name="dashDark" /><select aria-label="Linetype control"><option>CENTER</option></select><Icon name="chevron" /></label>
      <label class="sel s3"><Icon name="lineDark" /><select aria-label="Lineweight control"><option>ByLayer</option></select><Icon name="chevron" /></label>
      <label class="sel s4"><select aria-label="Plot style" disabled><option>ByColor</option></select><Icon name="chevron" class="faint" /></label>
    </div>

    <main class="work">
      <aside class="tools left"><button v-for="n in drawTools" :key="n" :aria-label="n"><Icon :name="n" /></button></aside>
      <div class="canvas">
        <svg class="sheet" viewBox="19 202 1239 493" preserveAspectRatio="xMinYMin slice" role="img" aria-label="Model space">
          <line v-for="g in gridX" :key="'x' + g.at" :x1="g.at" :x2="g.at" y1="208" y2="690" :class="g.major ? 'major' : 'minor'" />
          <line v-for="g in gridY" :key="'y' + g.at" :y1="g.at" :y2="g.at" x1="30" x2="1256" :class="g.major ? 'major' : 'minor'" />
          <path class="green" d="M164 491.500h70M198.500 455v89M650 237.500h26M694 237.500h26M684.500 240v32M760 263.500h41M812 263.500h36M803.500 228v35M803.500 268v84M862 383.500h60M893.500 345v78M893.500 473v34M780 490.500h30M824 490.500h24M812.500 458v28M812.500 492v30" />
          <g class="ink">
            <path d="M625 564.500V237A59.400 59.400 0 0 1 743.800 237V264A59.500 59.500 0 0 0 839.100 311.500A89.400 89.400 0 1 1 839.300 454.300A44.700 44.700 0 1 0 812.500 534.500" />
            <path d="M625 534.500H922.500V564.500H625" />
            <circle cx="684.300" cy="237" r="15" /><circle cx="893" cy="382.800" r="44.800" />
            <path d="M49.500 417.500h89.500v148h-89.500zM65 431.500h59.500v119.500h-59.500zM139 461.500h60a29.700 29.700 0 0 1 0 59.500h-60" />
            <circle cx="199" cy="491.500" r="15" />
            <path d="M109 358.500h20M209 358.500h20M139 355v41M139 402v8M199 355v41M199 402v8M199 416v41M19 416.500h3M28 416.500h18M144 416.500h43M184.500 387v20M184.500 472v19M19 565.500h3M28 565.500h18M49.500 570v29M139 570v29M60 596h13M117 596h10M231 450.500h-15l-8 20M228 511l40 29M273 544l6 4M284 551l32 23.500h15" />
            <path d="M547.500 252v25M547.500 282v9M547.500 297v29M547.500 337v7M547.500 350v25M547.500 396v25M547.500 427v7M547.500 441v34M547.500 481v8M547.500 495v25M544 236.500h29M579 236.500h7M592 236.500h29M544 534.500h32M579 534.500h10M592 534.500h29M551 564.500h25M582 564.500h7M595 564.500h26M553.500 505v15M553.500 579v16" />
            <path d="M625 569v42M922.500 569v42M640 607.500h43M689 607.500h7M703 607.500h44M801 607.500h44M851 607.500h7M864 607.500h44M863 509.500h17M936 509.500h16M922.500 506v25" />
            <path d="M1055 398v51M1055 469v51M897 382.500h17M920 382.500h8M935 382.500h33M974 382.500h8M988 382.500h33M1027 382.500h7M1041 382.500h18M922 534.500h6M934 534.500h34M974 534.500h7M988 534.500h33M1027 534.500h7M1041 534.500h18M754 429.500h14l12 17M770 328l-9 15M677 202l2 8" />
            <path class="cursor" d="M513 327.500h29M549 327.500h28M545.500 296v28M545.500 331v29" /><path d="M541.500 323.500h7v7h-7z" />
            <path class="ghost" d="M497 318.500h64M525 314.500h9M525 322.500h9" />
            <path d="M31.500 649v30M35 682.500h30M28.500 679.500h6v6h-6zM32 638l4 4 4-4M36 642v5M67 673.500l9 9M76 673.500l-9 9" />
          </g>
          <path v-for="(a, i) in arrows" :key="i" class="tip" d="M0 0L-15-3V3z" :transform="`translate(${a.x} ${a.y}) rotate(${a.a})`" />
          <text v-for="(d, i) in dims" :key="'t' + i" class="dim" :x="d.x" :y="d.y">{{ d.t }}</text>
        </svg>
        <div class="vplabel">[−][Top][2D Wireframe]</div>
        <div class="cube">
          <svg width="92" height="92" viewBox="0 0 92 92" aria-hidden="true"><circle cx="46" cy="46" r="37" fill="none" stroke="#4e5561" stroke-width="7" /><path d="M41 4h10v14H41zM41 75h10v14H41zM3 40h13v13H3zM78 40h11v13H78z" fill="#2c333f" /><rect x="29" y="29" width="34" height="34" fill="#b4b5b8" /><text x="46" y="14">N</text><text x="46" y="89">S</text><text x="8" y="52">W</text><text x="84" y="52">E</text></svg>
          <button class="top">TOP</button>
        </div>
        <button class="wcs">WCS</button>
        <div class="navbar" aria-label="Navigation bar"><svg width="20" height="140" viewBox="0 0 20 140" fill="none" stroke="#595e66" aria-hidden="true"><circle cx="10" cy="18" r="6" /><path d="M3 10l3 3M17 10l-3 3M8 34h4M5 40v8M8 40v8M12 40v8M15 40v8M4 60l10 10M14 60L4 70M8 80h4M10 88v14M4 95h12M8 107h4M4 114h12v14H4zM7 118h6v5H7z" /><circle cx="14" cy="72" r="3" /></svg></div>
        <div class="watermark"><p>Activate Windows</p><small>Go to Settings to activate Windows.</small></div>
        <div class="cmdline">
          <div class="handle"><Icon name="grip" /><button aria-label="Close command line"><Icon name="x" /></button><button aria-label="Customize command line"><Icon name="wrench" /></button></div>
          <div class="entry"><Icon name="prompt" /><Icon name="greytiny" /><input type="text" placeholder="Type a command" aria-label="Command" /><button aria-label="History"><Icon name="up" /></button></div>
        </div>
      </div>
      <aside class="gutter"><div class="tools right"><button v-for="n in editTools" :key="n" :aria-label="n"><Icon :name="n" /></button></div></aside>
    </main>

    <footer class="status">
      <div class="layouts"><button class="lay on">Model</button><button class="lay">Layout1</button><button class="lay">Layout2</button><button class="lay plus" aria-label="New layout"><Icon name="plus" /></button></div>
      <div class="bar">
        <span class="coords">4710.82257, 1942.21454, 0.00000</span><i class="sep"></i>
        <button class="model">MODEL</button><i class="sep"></i>
        <template v-for="(s, i) in statusLeft" :key="i"><i v-if="s === '|'" class="sep"></i><button v-else :class="s === 'caret' ? 'dd' : 'st'" :aria-label="s"><Icon :name="s" /></button></template>
        <button class="scale">1:1 / 100%</button><button class="dd" aria-label="Scale list"><Icon name="caret" /></button><i class="sep"></i>
        <button class="st" aria-label="Workspace switching"><Icon name="gear" /></button><button class="dd" aria-label="Workspace list"><Icon name="caret" /></button><i class="sep"></i>
        <button class="st" aria-label="Annotation monitor"><Icon name="splus" /></button><i class="sep"></i>
        <button class="units"><Icon name="unit" /><span>Decimal</span><Icon name="caret" /></button><i class="sep"></i>
        <button class="st" aria-label="Quick properties"><Icon name="qprop" /></button><i class="sep"></i>
        <button class="st lit" aria-label="Graphics performance"><Icon name="gpu" /></button>
        <button class="st wide" aria-label="Isolate objects"><Icon name="isolate" /></button><i class="sep"></i>
        <button class="st" aria-label="Clean screen"><Icon name="clean" /></button>
        <button class="st" aria-label="Customization"><Icon name="menu" /></button>
      </div>
    </footer>
  </div>
</template>

<style>
body { margin: 0; background: #404040; }
</style>

<style scoped>
.app { display: flex; flex-direction: column; height: 100vh; min-height: 600px; overflow: hidden; font: 10px/14px "Open Sans", "Noto Sans", sans-serif; color: #dedede; background: #404040; }
button, select, input { font: inherit; color: inherit; background: none; border: 0; padding: 0; margin: 0; border-radius: 0; appearance: none; min-width: 0; outline: 0; }
button { display: flex; align-items: center; justify-content: center; white-space: nowrap; }
svg { display: block; flex: none; }
i { font-style: normal; }
.defs { width: 0; height: 0; position: absolute; }
.letterbox { height: 24px; background: #0f0f0f; flex: none; }
.head { display: flex; flex: none; }
.appbtn { width: 27px; height: 27px; margin-bottom: -4px; gap: 1px; background: linear-gradient(#8d8d8d, #555); border: 1px solid #222; box-sizing: border-box; z-index: 1; }
.headrows { flex: 1; min-width: 0; }
.titlebar { display: flex; height: 19px; align-items: stretch; border-bottom: 1px solid #333; box-sizing: border-box; background: #ededed; }
.quick { display: flex; align-items: center; width: 164px; padding-left: 4px; box-sizing: border-box; background: linear-gradient(#8f8f8f, #6c6c6c); }
.q { width: 20px; }
.qd { width: 9px; }
.workspace { display: flex; align-items: center; gap: 3px; width: 150px; padding: 0 3px 0 4px; box-sizing: border-box; background: #4f4f4f; }
.workspace select { flex: 1; }
.quick2 { display: flex; align-items: center; gap: 6px; width: 34px; padding-left: 3px; box-sizing: border-box; background: #757575; }
.title { flex: 1; display: flex; gap: 12px; justify-content: center; align-items: center; margin: 0; font-size: 10px; font-weight: 400; color: #222; white-space: nowrap; }
.play { width: 11px; background: #777; }
.search { width: 150px; padding-left: 3px; background: #646464; border: 1px solid #3a3a3a; box-sizing: border-box; font-size: 9px; font-style: italic; }
.search::placeholder { color: #d0d0d0; opacity: 1; }
.account { display: flex; align-items: center; gap: 6px; width: 208px; padding: 0 3px; box-sizing: border-box; background: linear-gradient(#8f8f8f, #6c6c6c); }
.account button { gap: 4px; }
.account .sign { flex: 1; }
.sign span { flex: 1; text-align: left; }
.helpb { margin-left: 8px; }
.winbtns { display: flex; align-items: center; justify-content: flex-end; width: 138px; padding-right: 3px; box-sizing: border-box; }
.winbtns button { width: 39px; height: 100%; }
.menubar { display: flex; align-items: center; height: 17px; padding-left: 10px; gap: 16px; background: linear-gradient(#888, #5c5c5c); }
.docbtns { display: flex; gap: 4px; margin-left: auto; padding-right: 2px; }
.tabs { display: flex; height: 17px; flex: none; padding-left: 2px; background: #4f4f4f; }
.tabs button { padding: 0 6px 0 7px; color: #cfcfcf; }
.tabs .on { background: linear-gradient(#707070, #5b5b5b); border: 1px solid #7a7a7a; border-bottom: 0; color: #eee; padding: 0 7px; margin-right: 1px; }
.tabs .ribmin { margin-left: 14px; gap: 5px; }
.ribbon { display: flex; height: 83px; flex: none; background: linear-gradient(#4b4b4b, #3f3f3f); border-bottom: 1px solid #777; box-sizing: border-box; }
.panel { display: flex; flex-direction: column; flex: none; background: #5b5b5b; border-right: 1px solid #424242; box-sizing: border-box; }
.body { display: grid; flex: 1; padding: 4px 2px 0; }
.col { display: grid; grid-template-rows: repeat(3, 20px); align-content: start; min-width: 0; }
.cmd { justify-content: flex-start; text-align: left; }
.cmd i, .lab i { display: flex; justify-content: center; width: 18px; margin-right: 2px; }
.cmd .drop { margin-left: auto; }
.big { flex-direction: column; justify-content: flex-start; line-height: 13px; }
.big > svg:first-child { height: 28px; margin-bottom: 3px; }
.big > svg + span + svg { margin-top: 2px; }
.cap { height: 15px; gap: 5px; background: #494949; line-height: 15px; }
div.cap { text-align: center; }
.draw { width: 186px; }
.draw .body { grid-template-columns: 32px 40px 42px 34px 28px; }
.modify { width: 210px; }
.modify .body { grid-template-columns: 60px 59px 54px 20px; }
.modify .col:last-child { margin-left: 10px; }
.layers { width: 228px; }
.layers .body { grid-template-columns: 48px 1fr; column-gap: 1px; }
.combo { display: flex; align-items: center; height: 18px; padding: 0 3px; border: 1px solid #3a3a3a; background: linear-gradient(#555, #636363); box-sizing: border-box; gap: 5px; align-self: center; }
.combo select { flex: 1; }
.layersel { margin-right: 2px; padding-left: 6px; }
.strip { display: flex; align-items: center; }
.strip button { width: 20px; height: 20px; }
.strip .lab { width: auto; }
.annotation { width: 104px; }
.annotation .body { grid-template-columns: 34px 1fr; padding-right: 7px; }
.block { width: 90px; }
.block .body { grid-template-columns: 34px 1fr; }
.properties { width: 185px; }
.properties .body { grid-template-columns: 48px 18px 1fr; }
.mini { justify-items: center; align-items: center; }
.color { padding-left: 9px; gap: 8px; }
.properties .combo:not(.color) { gap: 3px; padding-left: 4px; }
.properties .cap { justify-content: flex-start; padding: 0 4px 0 58px; }
.cap .exp { margin-left: auto; }
.groups { width: 57px; }
.groups .body { grid-template-columns: 34px 1fr; padding-left: 0; }
.hot { width: 20px; height: 18px; background: #4d74b8; border: 1px solid #27406e; }
.utilities { width: 81px; }
.utilities .body { grid-template-columns: 54px 1fr; }
.clipboard { width: 66px; }
.clipboard .body { grid-template-columns: 40px 1fr; }
.view { width: 52px; border-right: 0; }
.files { display: flex; height: 21px; flex: none; padding-left: 16px; align-items: flex-end; background: #404040; }
.file { width: 102px; height: 18px; padding: 0 10px; justify-content: space-between; box-sizing: border-box; color: #a9a9a9; background: #5a5a5a; border-radius: 9px 9px 0 0; }
.file.on { background: linear-gradient(#7c7c7c, #606060); color: #eee; }
.add { width: 18px; height: 15px; margin: 0 0 1px 8px; background: #5a5a5a; border-radius: 5px; }
.props { display: flex; height: 21px; flex: none; align-items: center; gap: 3px; padding-left: 5px; background: #5e5e5e; }
.sel { display: flex; align-items: center; height: 15px; padding: 0 4px; gap: 3px; box-sizing: border-box; background: #dcdcdc; color: #222; font-family: "Liberation Sans", sans-serif; }
.sel select { flex: 1; opacity: 1; }
.s1 { width: 100px; }
.s2 { width: 108px; }
.s2, .s3 { gap: 2px; }
.s3 { width: 84px; }
.s4 { width: 80px; background: #c0c0c0; color: #909090; }
.faint { opacity: 0.2; }
.work { display: flex; flex: 1; min-height: 0; background: #5e5e5e; }
.tools { display: flex; flex-direction: column; flex: none; align-items: center; box-sizing: border-box; background: #585858; }
.tools button { flex: 1; width: 15px; min-height: 0; }
.left { width: 15px; height: 300px; margin-right: 4px; padding-top: 6px; }
.right { width: 17px; height: 272px; padding-top: 6px; border: 1px solid #3e3e3e; border-top: 0; }
.gutter { width: 22px; padding-left: 4px; box-sizing: border-box; }
.canvas { position: relative; flex: 1; min-width: 0; background: #2c333f; overflow: hidden; }
.sheet { width: 100%; height: 100%; }
.major { stroke: #36444e; }
.minor { stroke: #2e3843; }
.green { stroke: #27594f; fill: none; }
.ink { stroke: #d3d9e3; fill: none; }
.cursor { stroke: #a9b0bb; }
.ghost { stroke: #4a525d; }
.tip { fill: #e9eff8; }
.dim { font: 20px "Liberation Sans", sans-serif; fill: #e6ecf5; text-anchor: middle; }
.vplabel { position: absolute; left: 2px; top: 2px; font-size: 8px; }
.cube { position: absolute; right: 8px; top: 8px; width: 92px; height: 92px; }
.cube text { font: bold 14px "Liberation Sans", sans-serif; fill: #b9bdc4; text-anchor: middle; }
.top { position: absolute; inset: 29px; font-size: 9px; font-weight: 700; color: #5c6068; }
.wcs { position: absolute; right: 38px; top: 112px; width: 32px; height: 12px; border-radius: 3px; background: #8b9098; color: #d5d8dc; font-size: 8px; justify-content: flex-start; padding-left: 3px; }
.navbar { position: absolute; right: 1px; top: 141px; padding: 1px; border-radius: 3px; background: #666b73; }
.watermark { position: absolute; right: 29px; bottom: 7px; color: #7f848c; }
.watermark p { margin: 0; font-size: 16px; line-height: 22px; }
.watermark small { font-size: 12px; line-height: 18px; }
.cmdline { position: absolute; left: 290px; right: 290px; bottom: 0; height: 22px; display: flex; }
.handle { display: flex; align-items: center; gap: 7px; width: 45px; padding-left: 3px; box-sizing: border-box; background: #5c5f65; }
.handle button { flex: none; }
.entry { display: flex; flex: 1; align-items: center; gap: 3px; padding: 0 3px 0 4px; background: #abadb1; }
.entry input { flex: 1; padding-left: 2px; font: italic 12px "DejaVu Sans Mono", monospace; }
.entry input::placeholder { color: #6a6d73; opacity: 1; }
.status { display: flex; height: 25px; flex: none; background: #414141; }
.layouts { display: flex; flex: none; width: 258px; padding-left: 10px; box-sizing: border-box; align-items: flex-start; }
.lay { height: 16px; padding: 0 8px; margin-right: 2px; background: #5a5a5a; color: #b5b5b5; border-radius: 0 0 7px 7px; }
.lay.on { background: #7a7a7a; color: #fff; font-weight: 700; }
.bar { display: flex; flex: 1; height: 23px; align-items: center; background: #555; min-width: 0; white-space: nowrap; }
.coords { flex: none; box-sizing: border-box; padding-right: 4px; width: 177px; text-align: right; }
.model { width: 40px; flex: none; }
.st { width: 20px; height: 23px; flex: none; }
.dd { width: 13px; flex: none; }
.sep { width: 1px; height: 20px; background: #858585; flex: none; }
.scale { margin-left: auto; }
.units { gap: 9px; padding: 0 4px 0 8px; }
.lit { background: #787878; }
.wide { width: 26px; }
</style>
